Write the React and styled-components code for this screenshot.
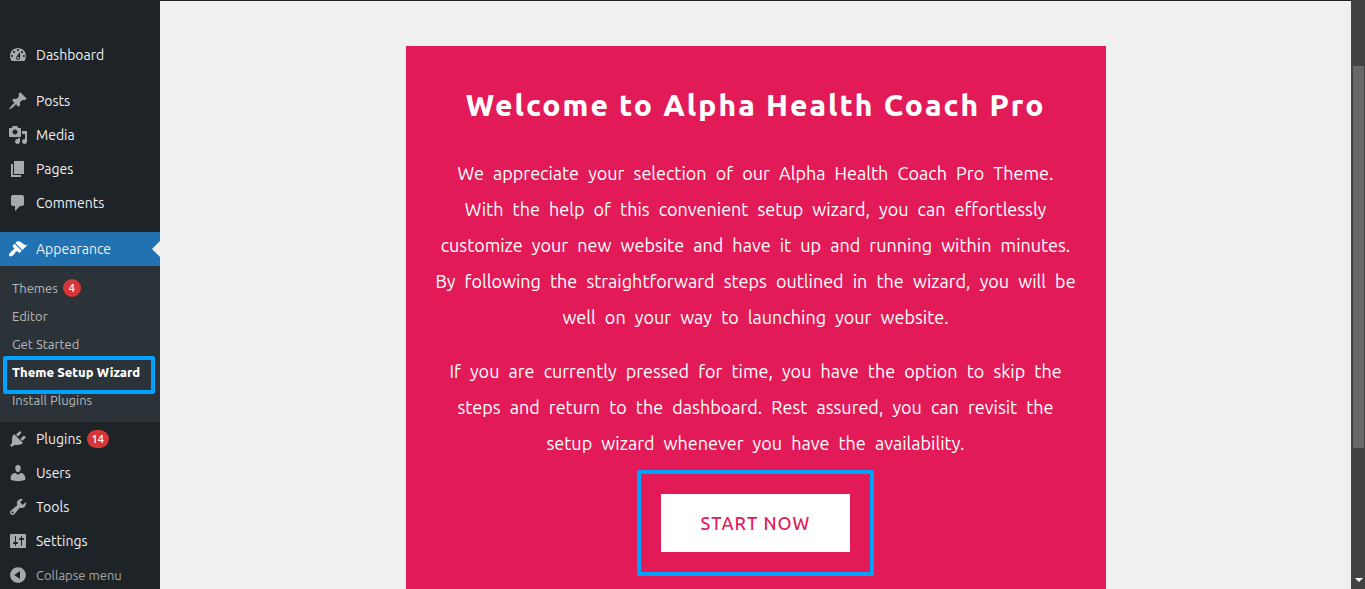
import React, { useState } from "react";
import styled, { createGlobalStyle } from "styled-components";

const icons = {
  dashboard:
    "M3.76 16h12.48c1.1-1.37 1.76-3.11 1.76-5 0-4.42-3.58-8-8-8s-8 3.58-8 8c0 1.89.66 3.63 1.76 5zM10 4c.55 0 1 .45 1 1s-.45 1-1 1-1-.45-1-1 .45-1 1-1zM6 6c.55 0 1 .45 1 1s-.45 1-1 1-1-.45-1-1 .45-1 1-1zm8 0c.55 0 1 .45 1 1s-.45 1-1 1-1-.45-1-1 .45-1 1-1zm-5.37 5.55L12 7v6c0 1.1-.9 2-2 2s-2-.9-2-2c0-.57.24-1.08.63-1.45zM4 10c.55 0 1 .45 1 1s-.45 1-1 1-1-.45-1-1 .45-1 1-1zm12 0c.55 0 1 .45 1 1s-.45 1-1 1-1-.45-1-1 .45-1 1-1zm-5 3c0-.55-.45-1-1-1s-1 .45-1 1 .45 1 1 1 1-.45 1-1z",
  posts:
    "M10.44 3.02l1.82-1.82 6.36 6.35-1.83 1.82c-1.05-.68-2.48-.57-3.41.36l-.75.75c-.92.93-1.04 2.35-.35 3.41l-1.83 1.82-2.41-2.41-2.8 2.79c-.42.42-3.38 2.71-3.8 2.29s1.86-3.39 2.28-3.81l2.79-2.79L4.1 9.36l1.83-1.82c1.05.69 2.48.57 3.4-.36l.75-.75c.93-.92 1.05-2.35.36-3.41z",
  media:
    "M13 11V4c0-.55-.45-1-1-1h-1.67L9 1H5L3.67 3H2c-.55 0-1 .45-1 1v7c0 .55.45 1 1 1h10c.55 0 1-.45 1-1zM7 4.5c1.38 0 2.5 1.12 2.5 2.5S8.38 9.5 7 9.5 4.5 8.38 4.5 7 5.62 4.5 7 4.5zM14 6h5v10.5c0 1.38-1.12 2.5-2.5 2.5S14 17.88 14 16.5s1.12-2.5 2.5-2.5c.17 0 .34.02.5.05V9h-3V6zm-4 8.05V13h2v3.5c0 1.38-1.12 2.5-2.5 2.5S7 17.88 7 16.5 8.12 14 9.5 14c.17 0 .34.02.5.05z",
  pages: "M6 15V2h10v13H6zm-1 1h8v2H3V5h2v11z",
  comments:
    "M5 2h9c1.1 0 2 .9 2 2v7c0 1.1-.9 2-2 2h-2l-5 5v-5H5c-1.1 0-2-.9-2-2V4c0-1.1.9-2 2-2z",
  appearance:
    "M14.48 11.06L7.41 3.99l1.5-1.5c.5-.56 2.3-.47 3.51.32 1.21.8 1.43 1.28 2.91 2.1 1.18.64 2.45 1.26 4.45.85zm-.71.71L6.7 4.7 4.93 6.47c-.39.39-.39 1.02 0 1.41l1.06 1.06c.39.39.39 1.03 0 1.42-.6.6-1.43 1.11-2.21 1.69-.35.26-.7.53-1.01.84C1.43 14.23.4 16.08 1.4 17.07c.99 1 2.84-.03 4.18-1.36.31-.31.58-.66.85-1.02.57-.78 1.08-1.61 1.69-2.21.39-.39 1.02-.39 1.41 0l1.06 1.06c.39.39 1.02.39 1.41 0z",
  plugins:
    "M13.11 4.36L9.87 7.6 8 5.73l3.24-3.24c.35-.34 1.05-.2 1.56.32.52.51.66 1.21.31 1.55zm-8 1.77l.91-1.12 9.01 9.01-1.19.84c-.71.71-2.63 1.16-3.82 1.16H6.14L4.9 17.26c-.59.59-1.54.59-2.12 0-.59-.58-.59-1.53 0-2.12l1.24-1.24v-3.88c0-1.13.4-3.19 1.09-3.89zm7.26 3.97l3.24-3.24c.34-.35 1.04-.21 1.55.31.52.51.66 1.21.31 1.55l-3.24 3.25z",
  users:
    "M10 9.25c-2.27 0-2.73-3.44-2.73-3.44C7 4.02 7.82 2 9.97 2c2.16 0 2.98 2.02 2.71 3.81 0 0-.41 3.44-2.68 3.44zm0 2.57L12.72 10c2.39 0 4.52 2.33 4.52 4.53v2.49s-3.65 1.13-7.24 1.13c-3.65 0-7.24-1.13-7.24-1.13v-2.49c0-2.25 1.94-4.48 4.47-4.48z",
  tools:
    "M16.68 9.77c-1.34 1.34-3.3 1.67-4.95.99l-5.41 6.52c-.99.99-2.59.99-3.58 0s-.99-2.59 0-3.57l6.52-5.42c-.68-1.65-.35-3.61.99-4.95 1.28-1.28 3.12-1.62 4.72-1.06l-2.89 2.89 2.82 2.82 2.86-2.87c.53 1.58.18 3.39-1.08 4.65zM3.81 16.21c.4.39 1.04.39 1.43 0 .4-.4.4-1.04 0-1.43-.39-.4-1.03-.4-1.43 0-.39.39-.39 1.03 0 1.43z",
  settings:
    "M18 16V4c0-.55-.45-1-1-1H3c-.55 0-1 .45-1 1v12c0 .55.45 1 1 1h14c.55 0 1-.45 1-1zM8 11h1c.55 0 1 .45 1 1s-.45 1-1 1H8v1.5c0 .28-.22.5-.5.5s-.5-.22-.5-.5V13H6c-.55 0-1-.45-1-1s.45-1 1-1h1V5.5c0-.28.22-.5.5-.5s.5.22.5.5V11zm5-2h-1c-.55 0-1-.45-1-1s.45-1 1-1h1V5.5c0-.28.22-.5.5-.5s.5.22.5.5V7h1c.55 0 1 .45 1 1s-.45 1-1 1h-1v5.5c0 .28-.22.5-.5.5s-.5-.22-.5-.5V9z",
  collapse:
    "M10 2.16c4.33 0 7.84 3.51 7.84 7.84s-3.51 7.84-7.84 7.84S2.16 14.33 2.16 10 5.71 2.16 10 2.16zm2 11.72V6.12L6.18 9.97z",
};

const content = [
  { name: "Posts", icon: "posts" },
  { name: "Media", icon: "media" },
  { name: "Pages", icon: "pages" },
  { name: "Comments", icon: "comments" },
];

const manage = [
  { name: "Plugins", icon: "plugins", count: 14 },
  { name: "Users", icon: "users" },
  { name: "Tools", icon: "tools" },
  { name: "Settings", icon: "settings" },
];

const themePages = [
  { name: "Themes", count: 4 },
  { name: "Editor" },
  { name: "Get Started" },
  { name: "Theme Setup Wizard" },
  { name: "Install Plugins" },
];

const Icon = ({ name }) => (
  <svg viewBox="0 0 20 20" width="20" height="20" aria-hidden="true">
    <path fillRule="evenodd" d={icons[name]} />
  </svg>
);

const MenuItem = ({ item, active }) => (
  <li>
    <MenuLink href="#" $active={active}>
      <Icon name={item.icon} />
      {item.name}
      {item.count && <Count>{item.count}</Count>}
    </MenuLink>
  </li>
);

const App = () => {
  const [page, setPage] = useState("Theme Setup Wizard");
  return (
    <Shell>
      <GlobalStyle />
      <Sidebar>
        <Menu>
          <MenuItem item={{ name: "Dashboard", icon: "dashboard" }} />
        </Menu>
        <Menu>
          {content.map((item) => (
            <MenuItem key={item.name} item={item} />
          ))}
        </Menu>
        <Menu>
          <MenuItem item={{ name: "Appearance", icon: "appearance" }} active />
          <SubMenu>
            {themePages.map((item) => (
              <SubItem key={item.name}>
                <SubLink
                  href="#"
                  $active={item.name === page}
                  onClick={() => setPage(item.name)}
                >
                  {item.name}
                  {item.count && <Count>{item.count}</Count>}
                </SubLink>
                {item.name === page && <Marker />}
              </SubItem>
            ))}
          </SubMenu>
          {manage.map((item) => (
            <MenuItem key={item.name} item={item} />
          ))}
          <li>
            <Collapse type="button">
              <Icon name="collapse" />
              Collapse menu
            </Collapse>
          </li>
        </Menu>
      </Sidebar>
      <Main>
        <Card>
          <Title>Welcome to Alpha Health Coach Pro</Title>
          <Text>
            We appreciate your selection of our Alpha Health Coach Pro Theme.
            <br />
            With the help of this convenient setup wizard, you can effortlessly
            <br />
            customize your new website and have it up and running within
            minutes.
            <br />
            By following the straightforward steps outlined in the wizard, you
            will be
            <br />
            well on your way to launching your website.
          </Text>
          <Text>
            If you are currently pressed for time, you have the option to skip
            the
            <br />
            steps and return to the dashboard. Rest assured, you can revisit the
            <br />
            setup wizard whenever you have the availability.
          </Text>
          <Frame>
            <Start type="button">START NOW</Start>
          </Frame>
        </Card>
      </Main>
      <Scrollbar>
        <Thumb />
        <svg viewBox="0 0 8 4" width="8" height="4" aria-hidden="true">
          <path d="M0 0h8L4 4z" fill="#fff" />
        </svg>
      </Scrollbar>
    </Shell>
  );
};

const GlobalStyle = createGlobalStyle`
  * {
    box-sizing: border-box;
  }
  body {
    margin: 0;
    background-color: #f0f0f0;
    font-family: Ubuntu, "Noto Sans", sans-serif;
  }
`;
const Shell = styled.div`
  display: grid;
  grid-template-columns: 160px 1fr 14px;
  grid-template-rows: 100vh;
  overflow: hidden;
`;
const Sidebar = styled.nav`
  display: flex;
  flex-direction: column;
  gap: 12px;
  padding-top: 38px;
  background-color: #1d2327;
`;
const Menu = styled.ul`
  margin: 0;
  padding: 0;
  list-style: none;
`;
const MenuLink = styled.a`
  position: relative;
  display: flex;
  align-items: center;
  height: 34px;
  padding-left: 8px;
  font-size: 14px;
  color: #f0f0f1;
  text-decoration: none;
  background-color: ${(props) => (props.$active ? "#2271b1" : "transparent")};

  svg {
    margin-right: 8px;
    fill: ${(props) => (props.$active ? "#fff" : "#a7aaad")};
  }
  &::after {
    content: "";
    display: ${(props) => (props.$active ? "block" : "none")};
    position: absolute;
    right: 0;
    border: 8px solid transparent;
    border-left-width: 0;
    border-right-color: #f0f0f0;
  }
`;
const Count = styled.span`
  min-width: 18px;
  height: 18px;
  margin-left: 5px;
  padding: 0 5px;
  border-radius: 9px;
  background-color: #d63638;
  color: #fff;
  font-size: 11px;
  font-weight: 500;
  line-height: 18px;
  text-align: center;
`;
const SubMenu = styled.ul`
  margin: 0;
  padding: 8px 0;
  list-style: none;
  background-color: #2c3338;
`;
const SubItem = styled.li`
  position: relative;
`;
const SubLink = styled.a`
  display: flex;
  align-items: center;
  height: 28px;
  padding-left: 12px;
  font-size: 13px;
  font-weight: ${(props) => (props.$active ? 800 : 400)};
  color: ${(props) => (props.$active ? "#fff" : "#b5b8bb")};
  text-decoration: none;
  white-space: nowrap;
`;
const Marker = styled.span`
  position: absolute;
  top: -2px;
  left: 3px;
  right: 5px;
  height: 38px;
  border: 4px solid #00a2ff;
  border-radius: 2px;
  pointer-events: none;
`;
const Collapse = styled.button`
  display: flex;
  align-items: center;
  gap: 8px;
  width: 100%;
  height: 34px;
  padding: 0 0 0 8px;
  border: none;
  background-color: transparent;
  color: #a7aaad;
  font-family: inherit;
  font-size: 13px;
  cursor: pointer;

  svg {
    fill: #a7aaad;
  }
`;
const Main = styled.main`
  display: flex;
  justify-content: center;
  border-top: 1px solid #1d2327;
  padding: 45px 20px 0;
`;
const Card = styled.section`
  width: 100%;
  max-width: 700px;
  padding: 39px 20px;
  background-color: #e21b58;
  color: #fff;
  text-align: center;
`;
const Title = styled.h1`
  margin: 0 0 30px;
  font-size: 30px;
  font-weight: 800;
  line-height: 40px;
  letter-spacing: 2px;
`;
const Text = styled.p`
  margin: 0 0 18px;
  font-size: 18px;
  line-height: 36px;
  word-spacing: 5px;
`;
const Frame = styled.div`
  display: inline-block;
  margin-top: -9px;
  padding: 20px;
  border: 4px solid #00a2ff;
  border-radius: 2px;
`;
const Start = styled.button`
  display: block;
  height: 58px;
  padding: 0 40px;
  border: none;
  background-color: #fff;
  color: #e21b58;
  font-family: inherit;
  font-size: 18px;
  font-weight: 500;
  letter-spacing: 1px;
  cursor: pointer;
`;
const Scrollbar = styled.div`
  display: flex;
  flex-direction: column;
  align-items: center;
  justify-content: space-between;
  padding: 66px 1px 7px 2px;
  background-color: #424242;
`;
const Thumb = styled.div`
  width: 100%;
  height: 74%;
  background-color: #686868;
`;

export default App;
